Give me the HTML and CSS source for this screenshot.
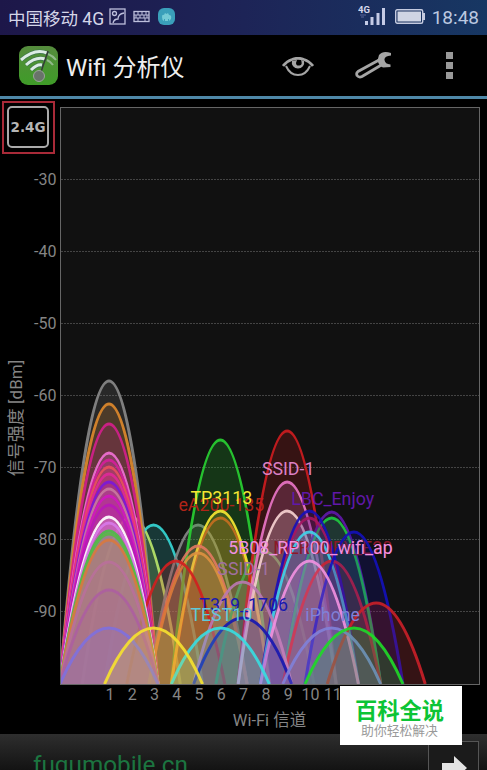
FILE: index.html
```html
<!DOCTYPE html>
<html lang="zh-CN">
<head>
	<meta charset="utf-8">
	<title>Wifi 分析仪</title>
	<link rel="stylesheet" href="styles.css">
</head>
<body>
	<div class="status">
		<span class="carrier">中国移动 4G</span>
		<svg class="tray" width="70" height="20" viewBox="0 0 70 20">
			<g fill="none" stroke="#bdbfdc" stroke-width="1.3">
				<rect x="2" y="2" width="15" height="15"/>
				<circle cx="6.500" cy="6.500" r="2"/>
				<path d="M5 16Q6 12 10 12Q10 7 16 6"/>
				<rect x="26" y="4.500" width="15" height="10"/>
				<path d="M26 8h15M26 11h15M30 4v4M34 4v4M38 4v4M28 8v3M32 8v3M36 8v3M39 8v3M30 11v3M37 11v3" stroke-width="1"/>
			</g>
			<rect x="50" y="1" width="17" height="17" rx="6" fill="#3a9fba"/>
			<path d="M54 10q0-3 2-2l1-2 1.500 1L60 6l1 2q3 0 2 4l-2 2v-2h-1v2h-3v-2h-1v2Q54 13 54 10z" fill="#75cbd6"/>
		</svg>
		<svg class="signal" width="28" height="24" viewBox="0 0 28 24">
			<text x="0" y="9" class="net">4G</text>
			<path d="M2 11h6M3 13h3" stroke="#59659a" stroke-width="1"/>
			<path d="M8.500 21v-4M14 21v-8M20 21v-12M25.500 21v-17" stroke="#c5cbe6" stroke-width="3"/>
		</svg>
		<svg class="battery" width="31" height="16" viewBox="0 0 31 16">
			<rect x=".7" y=".7" width="27" height="13.600" rx="1.500" fill="none" stroke="#c5cbe0" stroke-width="1.400"/>
			<rect x="2.500" y="2.500" width="23.500" height="10" fill="#cfd5e4"/>
			<rect x="28" y="4" width="2" height="7" fill="#c5cbe0"/>
		</svg>
		<span class="clock">18:48</span>
	</div>

	<div class="bar">
		<svg class="logo" width="39" height="39" viewBox="0 0 39 39">
			<defs>
				<linearGradient id="leaf" x1="0" y1="0" x2="0" y2="1">
					<stop offset="0" stop-color="#558b3d"/>
					<stop offset="1" stop-color="#3f9c28"/>
				</linearGradient>
			</defs>
			<rect width="39" height="39" rx="9" fill="url(#leaf)"/>
			<g fill="none" stroke="#3d7450" stroke-width="4.200">
				<path d="M2 14Q17 1 30 8M7 19Q18 9 27 14M12 24Q19 17 24 20"/>
			</g>
			<g fill="none" stroke="#dcece5" stroke-width="3">
				<path d="M2 14Q16 2 28 7M7 19Q17 10 26 13M12 24Q18 18 23 19"/>
			</g>
			<path d="M29 8Q34 10 37 14M28 14Q32 16 34 19" fill="none" stroke="#91b98a" stroke-width="2"/>
			<path d="M21 29L29 5" stroke="#333d35" stroke-width="1.500"/>
			<circle cx="20" cy="30" r="5.500" fill="#69736a" stroke="#9ba49b"/>
		</svg>
		<h1 class="title">Wifi 分析仪</h1>
		<svg class="eye" width="32" height="20" viewBox="0 0 32 20">
			<path d="M1 9Q5 4 10 2.500Q16 0 22 2.500Q27 4 31 9" fill="none" stroke="#a5a5a5" stroke-width="2.800"/>
			<path d="M4 9Q8 18 16 18Q24 18 28 9" fill="none" stroke="#a5a5a5" stroke-width="2"/>
			<path d="M10 4a6.200 6 0 1 0 12 0l-3-1q2 5-1.500 5.500T14 6l1-3z" fill="#a5a5a5"/>
		</svg>
		<svg class="wrench" width="38" height="29" viewBox="0 0 38 29">
			<path d="M24 9L3 20.500Q1 22 2 24.500Q4 27 7 25.500L28 13" fill="none" stroke="#a5a5a5" stroke-width="2.800"/>
			<path d="M36 2Q28-1 24 4L22.500 9.500Q24 15 28 16.500L35.500 16V13.500Q30 13 29.500 9T36 4.500z" fill="#a5a5a5"/>
		</svg>
		<div class="more"><i></i><i></i><i></i></div>
	</div>

	<div class="graph">
		<svg id="chart" width="487" height="635" viewBox="0 99 487 635">
			<defs>
				<clipPath id="plot"><rect x="60" y="107" width="420" height="577"/></clipPath>
			</defs>
			<rect x="60.500" y="107.500" width="419" height="577" fill="#111"/>
			<g id="grid"></g>
			<g id="waves" clip-path="url(#plot)"></g>
			<rect x="60.500" y="107.500" width="419" height="577" fill="none" stroke="#666"/>
			<g id="channels"></g>
			<text class="axis" x="269.500" y="726">Wi-Fi 信道</text>
			<text class="axis side" transform="translate(22 418) rotate(-90)">信号强度 [dBm]</text>
		</svg>
		<div class="band"><span>2.4G</span></div>
	</div>

	<div class="ad">
		<span class="link">fugumobile.cn</span>
		<div class="go">
			<svg width="26" height="28" viewBox="0 0 26 28"><path d="M0 9h12V2l13 12-13 12v-7H0z" fill="#e4e4e4"/></svg>
		</div>
	</div>

	<div class="mark">
		<b>百科全说</b>
		<span>助你轻松解决</span>
	</div>
	<script src="chart.js"></script>
</body>
</html>
```
FILE: styles.css
```css
body {
	margin: 0;
	width: 487px;
	height: 770px;
	overflow: hidden;
	position: relative;
	display: flex;
	flex-direction: column;
	background: #000;
	font-family: Roboto, "Noto Sans CJK SC", sans-serif;
}
svg { display: block; flex: none; }
.status {
	height: 35px;
	box-sizing: border-box;
	padding: 0 8px;
	display: flex;
	align-items: center;
	flex: none;
	background: linear-gradient(90deg, #1d1749, #1d2457 50%, #173763);
	color: #d5d6e8;
}
.carrier { font-size: 17.5px; white-space: nowrap; width: 100px; }
.tray { margin-top: -2px; }
.signal { margin: -3px 0 0 180px; }
.net { font: bold 9.5px Roboto, sans-serif; fill: #d5d8ec; }
.battery { margin: -1px 0 0 9px; }
.clock { font-size: 19px; margin-left: 6px; color: #bcc8e0; }
.bar {
	height: 64px;
	box-sizing: border-box;
	padding-left: 19px;
	display: flex;
	align-items: center;
	flex: none;
	border-bottom: 3px solid #4f88a8;
}
.title {
	margin: 0 0 0 8px;
	width: 216px;
	font-size: 24px;
	font-weight: normal;
	color: #eee;
}
.eye { margin-top: 3px; }
.wrench { margin: 0 0 0 41px; }
.more {
	display: flex;
	flex-direction: column;
	gap: 3px;
	margin-left: 53px;
}
.more i { width: 7px; height: 7px; background: #999; }
.graph { position: relative; height: 635px; flex: none; }
.band {
	position: absolute;
	left: 2px;
	top: 2px;
	width: 53px;
	height: 53px;
	box-sizing: border-box;
	padding: 3px;
	border: 2px solid #a82a38;
}
.band span {
	display: block;
	height: 38px;
	line-height: 38px;
	width: 38px;
	border: 2px solid #aaa;
	border-radius: 5px;
	text-align: center;
	font-family: "DejaVu Sans", sans-serif;
	font-size: 13.5px;
	font-weight: bold;
	color: #b5b5b5;
}
.tick { font-size: 16px; fill: #858585; }
.axis { font-size: 16.5px; fill: #858585; text-anchor: middle; }
.side { font-size: 17px; }
.name { font-size: 17.8px; text-anchor: middle; }
.ad {
	height: 36px;
	flex: none;
	display: flex;
	justify-content: space-between;
	background: linear-gradient(#2e2e2e, #131313);
}
.link { font-size: 24.3px; color: #1c7540; margin: 16px 0 0 33px; white-space: nowrap; }
.go {
	width: 51px;
	height: 36px;
	box-sizing: border-box;
	margin: 7px 8px 0 0;
	padding: 12px 0 0 13px;
	border: 1px solid #555;
	background: #1b1b1b;
}
.mark {
	position: absolute;
	left: 340px;
	top: 686px;
	width: 122px;
	height: 59px;
	box-sizing: border-box;
	padding-right: 3px;
	background: #fff;
	display: flex;
	flex-direction: column;
	align-items: center;
	font-family: "Noto Sans CJK SC", sans-serif;
}
.mark b { font-size: 22.3px; line-height: 26px; margin-top: 10px; font-weight: bold; color: #0cc435; }
.mark span { font-size: 12.8px; line-height: 16px; color: #999; }
```
FILE: chart.js
```js
var NS = "http://www.w3.org/2000/svg";
var BASE = 684;

// channel, top of the curve, colour, network name, name colour
var nets = [
	[2, 517, "#d8e850"],
	[3, 525, "#35d5d2"],
	[1, 381, "#888888"],
	[1, 404, "#dc882b"],
	[1, 424, "#d3208b"],
	[1, 453, "#f070d4"],
	[1, 460, "#d51e9a"],
	[1, 467, "#e8505c"],
	[1, 474, "#e02898"],
	[1, 482, "#7c18d8"],
	[1, 489, "#c878a0"],
	[1, 496, "#d018c0"],
	[1, 505, "#b818b8"],
	[5, 525, "#858585"],
	[6, 440, "#28cf32"],
	[6, 518, "#b8501c", "eA200-135", "#b02418"],
	[6, 511, "#f5e632", "TP3113"],
	[5, 546, "#e07860"],
	[5, 553, "#dc9040"],
	[4, 561, "#d02020"],
	[8, 552, "#48a848"],
	[9, 431, "#cc1c20"],
	[9, 482, "#e874c4", "SSID-1", "#dc80c4"],
	[9, 511, "#f5d0d0"],
	[11, 512, "#6018a8", "LBC_Enjoy"],
	[11, 518, "#20c840"],
	[10, 518, "#c8184c"],
	[10, 511, "#1810b8"],
	[10, 532, "#40d0e8"],
	[11, 561, "#c82434", "MERCURY_E20", "#8c1828"],
	[12, 532, "#1410b8"],
	[7, 582, "#b878b0", "SSID-1", "#a070a0"],
	[10, 561, "#f090e0", "5B08_RP100_wifi_ap"],
	[13, 603, "#c82028"],
	[7, 618, "#1818b0", "T319_1706"],
	[6, 628, "#38dce0", "TEST10", "#60c8d8"],
	[11, 628, "#8080d8", "iPhone"],
	[12, 628, "#20d828"],
	[1, 517, "#ffffff"],
	[1, 523, "#d878e8"],
	[1, 531, "#4cbc48"],
	[1, 534, "#58b848"],
	[1, 540, "#d87840"],
	[1, 562, "#b8709a"],
	[1, 590, "#ac60a0"],
	[1, 628, "#8070dc"],
	[3, 628, "#f5e030"]
];

function add(parent, tag, attrs, txt) {
	var el = document.createElementNS(NS, tag);
	for (var k in attrs) el.setAttribute(k, attrs[k]);
	if (txt) el.textContent = txt;
	document.getElementById(parent).appendChild(el);
}

function chX(ch) {
	return 109 + (ch - 1) * 22.27;
}

// dBm scale
for (var db = -30; db >= -90; db -= 10) {
	var y = 179.5 + (-30 - db) * 7.2;
	add("grid", "path", {d: "M61 " + y + "H479", stroke: "#444", "stroke-dasharray": "2 1"});
	add("grid", "text", {x: 56.5, y: y + 5.5, "class": "tick", "text-anchor": "end"}, String(db));
}

for (var i = 0; i < nets.length; i++) {
	var n = nets[i], x = chX(n[0]);
	var d = "M" + (x - 49) + " " + BASE + "Q" + x + " " + (2 * n[1] - BASE) + " " + (x + 49) + " " + BASE;
	add("waves", "path", {d: d, fill: n[2], "fill-opacity": 0.2, stroke: n[2], "stroke-width": 3, "stroke-opacity": 0.92});
	if (n[3]) add("waves", "text", {x: x + 1, y: n[1] - 7, "class": "name", fill: n[4] || n[2]}, n[3]);
}

for (var c = 1; c <= 11; c++) {
	add("channels", "text", {x: chX(c) + 1, y: 700, "class": "tick", "text-anchor": "middle"}, String(c));
}
```
